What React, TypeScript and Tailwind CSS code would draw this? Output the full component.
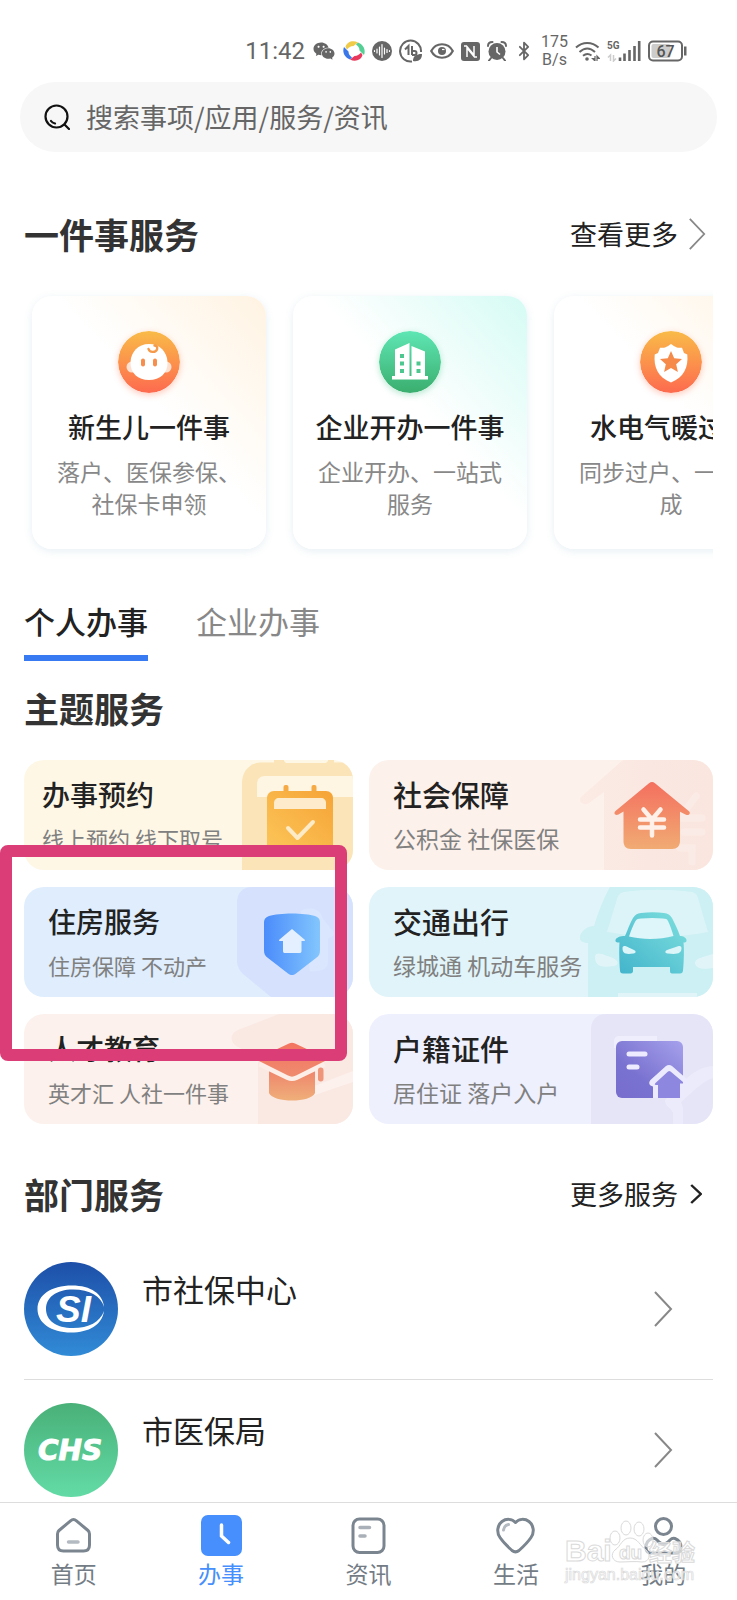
import { useState } from 'react';
import type { ReactNode } from 'react';
import { Bluetooth } from 'lucide-react';
import { AiFillWechat } from 'react-icons/ai';

const events = [
    { title: '新生儿一件事', desc: '落户、医保参保、社保卡申领', tint: 'from-[#fff3e2]', icon: <BabyIcon /> },
    { title: '企业开办一件事', desc: '企业开办、一站式服务', tint: 'from-[#d5fbf4]', icon: <BuildingIcon /> },
    { title: '水电气暖过户', desc: '同步过户、一次办成', tint: 'from-[#fff3e2]', icon: <ShieldStarIcon /> },
];

const topics = [
    { title: '办事预约', desc: '线上预约 线下取号', box: 'bg-[#fef7e6] pl-[18px]', text: 'text-[28px]', sub: 'text-[22px]', art: <CalendarArt /> },
    { title: '社会保障', desc: '公积金 社保医保', box: 'bg-[#fcf1eb] pl-6', text: 'text-[29px]', sub: 'text-[23px]', art: <HouseArt /> },
    { title: '住房服务', desc: '住房保障 不动产', box: 'bg-[#dfedfd] pl-6', text: 'text-[28px]', sub: 'text-[22px]', art: <ShieldArt /> },
    { title: '交通出行', desc: '绿城通 机动车服务', box: 'bg-[#e1f4f9] pl-6', text: 'text-[29px]', sub: 'text-[23px]', art: <CarArt /> },
    { title: '人才教育', desc: '英才汇 人社一件事', box: 'bg-[#fcf1ec] pl-6', text: 'text-[28px]', sub: 'text-[22px]', art: <CapArt /> },
    { title: '户籍证件', desc: '居住证 落户入户', box: 'bg-[#eff0fe] pl-6', text: 'text-[29px]', sub: 'text-[23px]', art: <DocumentArt /> },
];

const departments = [
    { name: '市社保中心', logo: <SocialLogo /> },
    { name: '市医保局', logo: <MedicalLogo /> },
];

const tabs = ['个人办事', '企业办事'];

const navItems = [
    { name: '首页', icon: <NavHome /> },
    { name: '办事', icon: <NavClock /> },
    { name: '资讯', icon: <NavNews /> },
    { name: '生活', icon: <NavHeart /> },
    { name: '我的', icon: <NavUser /> },
];

function BabyIcon() {
    return (
        <svg viewBox="0 0 62 62" className="size-[62px] rounded-full shadow-[0_2px_6px_rgba(255,110,70,0.35)]">
            <defs>
                <linearGradient id="baby" x1="0" y1="0" x2="0" y2="1">
                    <stop offset="0" stopColor="#f9bb48" />
                    <stop offset="1" stopColor="#fd6a4f" />
                </linearGradient>
            </defs>
            <circle cx="31" cy="31" r="31" fill="url(#baby)" />
            <circle cx="14" cy="36" r="5.5" fill="#fde0cf" />
            <circle cx="48" cy="36" r="5.5" fill="#fde0cf" />
            <path d="M31 13c11 0 18 8 18.500 18C50 42 42 49 31 49S12 42 12.500 31C13 21 20 13 31 13Z" fill="#fff" />
            <path d="M30.500 18c1 3.500 7 4 8.500.5.8-2.200-.5-4-2.500-4" fill="none" stroke="#f59a4b" strokeWidth="2.400" strokeLinecap="round" />
            <rect x="23" y="27.500" width="4" height="8" rx="2" fill="#f68f4d" />
            <rect x="35" y="27.500" width="4" height="8" rx="2" fill="#f68f4d" />
        </svg>
    );
}

function BuildingIcon() {
    return (
        <svg viewBox="0 0 62 62" className="size-[62px] rounded-full shadow-[0_2px_6px_rgba(60,190,130,0.35)]">
            <defs>
                <linearGradient id="building" x1="0" y1="0" x2="0" y2="1">
                    <stop offset="0" stopColor="#5fe6b4" />
                    <stop offset="1" stopColor="#3aae6e" />
                </linearGradient>
            </defs>
            <circle cx="31" cy="31" r="31" fill="url(#building)" />
            <path d="M16 45V18.500L30.500 12v33h2V15L46 20.500V45h3v3.500H13V45Z" fill="#fff" />
            <path d="M21 23h4v4h-4zM21 30.500h4v4h-4zM21 38h4v4h-4zM37.500 30.500h4v4h-4zM37.500 38h4v4h-4z" fill="#4cc78f" />
        </svg>
    );
}

function ShieldStarIcon() {
    return (
        <svg viewBox="0 0 62 62" className="size-[62px] rounded-full shadow-[0_2px_6px_rgba(255,110,70,0.35)]">
            <defs>
                <linearGradient id="star" x1="0" y1="0" x2="0" y2="1">
                    <stop offset="0" stopColor="#f9bb48" />
                    <stop offset="1" stopColor="#fd6a4f" />
                </linearGradient>
            </defs>
            <circle cx="31" cy="31" r="31" fill="url(#star)" />
            <path d="M31 13c5 3.500 6 4 11 3.800l2 5.200 3.300 1.500C48.500 36 44 46.500 31 51.500 18 46.500 13.500 36 14.700 23.500L18 22l2-5.200c5 .2 6-.3 11-3.800Z" fill="#fff" />
            <path d="m31 20 3.200 7.200 7.800.8-5.800 5.200 1.700 7.800-6.900-4-6.900 4 1.700-7.800L20 28l7.800-.8Z" fill="#f68a4b" />
        </svg>
    );
}

function CalendarArt() {
    return (
        <svg viewBox="0 0 136 110" className="h-[110px] w-[136px] shrink-0">
            <defs>
                <linearGradient id="cal" x1="1" y1="0" x2="0" y2="1">
                    <stop offset="0" stopColor="#f6a437" />
                    <stop offset="1" stopColor="#fcc558" />
                </linearGradient>
            </defs>
            <path d="M25 110V23C25 11 33 2.500 45 2.500h91V110Z" fill="#fbe4b8" />
            <path d="M57 0h60v3H57z" fill="#fbe4b8" />
            <path d="M67 0h44v1l-2 2H69l-2-2Z" fill="#fef7e6" />
            <path d="M40 37V24c0-5 3-8 8-8h88v21Z" fill="#fef5e3" />
            <rect x="66.500" y="25" width="5" height="10" rx="2" fill="#f6aa44" />
            <rect x="94.500" y="25" width="5" height="10" rx="2" fill="#f6aa44" />
            <path d="M50 90V38c0-4 3-7 7-7h52c4 0 7 3 7 7v52Z" fill="url(#cal)" />
            <path d="M57 49v-6c0-3 2-5 5-5h42c3 0 5 2 5 5v6Z" fill="#fdebcb" />
            <path d="m71 68 9.500 10L96 62" fill="none" stroke="#fdeac6" strokeWidth="4" strokeLinecap="round" strokeLinejoin="round" />
        </svg>
    );
}

function HouseArt() {
    return (
        <svg viewBox="0 0 136 110" className="h-[110px] w-[136px] shrink-0">
            <defs>
                <linearGradient id="house" x1="0" y1="0" x2="0" y2="1">
                    <stop offset="0" stopColor="#f46f5f" />
                    <stop offset="1" stopColor="#f1ab73" />
                </linearGradient>
                <linearGradient id="houseBack" x1="0" y1="0" x2="1" y2="0">
                    <stop offset="0" stopColor="#fbebe4" />
                    <stop offset="0.500" stopColor="#fae7e1" />
                    <stop offset="1" stopColor="#fae6df" />
                </linearGradient>
            </defs>
            <path d="M46 0 4 37c-3 4 2 10 8 6l15-11v78h109V0Z" fill="url(#houseBack)" />
            <path d="M119 36 103 58h22M107 72h18M103 88h12v14" fill="none" stroke="#fbebe6" strokeWidth="7" strokeLinecap="round" />
            <path d="M75 22c1 0 2 .5 3 1.300l34 28c2 2 0 4.500-3 3.500l-6-3V81c0 5-3 8-8 8H54c-5 0-7.500-3-7.500-8V51.500l-5 3c-3 1.500-5.500-1-3-3.500L72 23.300c1-.8 2-1.300 3-1.300Z" fill="url(#house)" />
            <path d="m66.500 49.500 8.500 10 8.500-10M63 59.500h24M63 67.500h24M75 60v15.500" fill="none" stroke="#fff1ea" strokeWidth="4.500" strokeLinecap="round" strokeLinejoin="round" />
        </svg>
    );
}

function ShieldArt() {
    return (
        <svg viewBox="0 0 136 110" className="h-[110px] w-[136px] shrink-0">
            <defs>
                <linearGradient id="shield" x1="0" y1="0" x2="1" y2="0">
                    <stop offset="0" stopColor="#4a8cfb" />
                    <stop offset="1" stopColor="#83c6fd" />
                </linearGradient>
            </defs>
            <path d="M35 0C26 0 20 6 20 15v58c0 6 2 10 6 14l28 23h82V0Z" fill="#d6e2fd" />
            <path d="M84 24c12-6 20 0 22 8l8 10c5 4 3 8-3 9v24c0 7-7 10-18 9Z" fill="#d9e6fe" />
            <path d="M75 26.500c9 0 18 1 23 2.500 3 1 5 3 5 6v28c0 4-1 6-4 8L79 86.500c-3 2-5 2-8 0L51 71c-3-2-4-4-4-8V35c0-3 2-5 5-6 5-1.500 14-2.500 23-2.500Z" fill="url(#shield)" />
            <path d="M75 42 62.500 52.500c-.8.800-.5 1.500.5 1.500h3v10c0 1.500.8 2 2 2h14.500c1.200 0 2-.5 2-2V54h2.500c1 0 1.300-.7.500-1.500Z" fill="#e4f0ff" />
        </svg>
    );
}

function CarArt() {
    return (
        <svg viewBox="0 0 136 110" className="h-[110px] w-[136px] shrink-0">
            <defs>
                <linearGradient id="car" x1="1" y1="0" x2="0" y2="1">
                    <stop offset="0" stopColor="#7fe0de" />
                    <stop offset="1" stopColor="#41b3cb" />
                </linearGradient>
            </defs>
            <path d="M33 0C26 12 21 26 17 39c-6 0-12 4-14 10-1 5 3 7 8 7v54h125V0Z" fill="#ccf0f3" />
            <path d="M40 12c1-4 3-6 7-7 20-3 46-3 68 0 4 1 5 3 6 6l10 34c-30 6-66 6-101 0Z" fill="#dcf4f8" />
            <path d="M18 70c0-4 3-4 7-3l11 4c6 3 6 7 1 8-13 2-19 0-19-9ZM118 76c0-3 4-5 8-6l10-3v14c-10 2-18 0-18-5ZM41 106h79v4H41z" fill="#e1f5f9" />
            <path d="M48 49c3-7 5-13 8-18 2-3 4-4.500 8-5 8-1 16-1 23 0 4 .5 6 2 8 5 3 6 6 12 8 18 3 0 6 1.500 6.500 4 .3 2-1 2.500-3 2.500.7 6 .5 18-.5 28-.2 2-1 3-3 3h-8c-1.500 0-2-1-2-2.500V80H56v4c0 1.500-1 2.500-2.500 2.500H46c-2 0-3-1-3-3-.8-10-1-22-.5-28-3 0-4.500-.5-4-2.500.8-2.500 4.500-4 9.500-4Z" fill="url(#car)" />
            <path d="M52 49.500c2-6 4-11 6.500-15.500C60 32 61 31.700 64 31.500c8-.8 15-.8 22 0 3 .2 4 .5 5 2.500 2 4 4 9.500 5.500 15-13 3.500-30 4-44.500.5Z" fill="#def5f9" />
            <path d="M45.500 61c0-2 1.500-2.500 3.500-1.800l8 3.800c2.500 1.500 2 3-.5 3.500-8 1.200-11 0-11-5.500ZM104.500 61c0-2-1.500-2.500-3.500-1.800L90 63c-2.500 1.500-2 3 .5 3.500 10 1.200 14 0 14-5.500Z" fill="#dcf5f8" />
        </svg>
    );
}

function CapArt() {
    return (
        <svg viewBox="0 0 136 110" className="h-[110px] w-[136px] shrink-0">
            <defs>
                <linearGradient id="cap" gradientUnits="userSpaceOnUse" x1="0" y1="28" x2="0" y2="87">
                    <stop offset="0" stopColor="#f4735f" />
                    <stop offset="0.550" stopColor="#ef8a6e" />
                    <stop offset="1" stopColor="#efb07a" />
                </linearGradient>
            </defs>
            <path d="M62 0 21 16c-9 4-8 13 0 17l20 11v66h95V0Z" fill="#fae8e3" />
            <path d="m136 57-44 17v9l44-15Z" fill="#fcf1ed" />
            <path d="M52 57v22c4 10 42 10 46 0V57Z" fill="url(#cap)" />
            <path d="m43 49 28 13.500c3 1.500 5 1.500 8 0L107 49" fill="none" stroke="#fcefe9" strokeWidth="7" />
            <path d="M72 29.500c2-1 4-1 6 0l30 14c2 1 2 2.500 0 3.500L79 61.500c-3 1.500-5 1.500-8 0L42 47c-2-1-2-2.500 0-3.500Z" fill="url(#cap)" />
            <rect x="101" y="53.500" width="5.500" height="14" rx="2.700" fill="#ef957a" />
        </svg>
    );
}

function DocumentArt() {
    return (
        <svg viewBox="0 0 136 110" className="h-[110px] w-[136px] shrink-0">
            <defs>
                <linearGradient id="doc" x1="0" y1="1" x2="1" y2="0">
                    <stop offset="0" stopColor="#766dcd" />
                    <stop offset="0.350" stopColor="#7a72d0" />
                    <stop offset="1" stopColor="#a6a1ec" />
                </linearGradient>
            </defs>
            <path d="M14 110V15C14 6 20 0 29 0h107v110Z" fill="#e6e5f8" />
            <path d="M37 34v-7c0-3 2-5 5-5h38v6Z" fill="#eeeefc" />
            <path d="M136 52c-12 1-20 6-30 16L88 86c0 8 8 8 8 14v10h10V94l-2-6c12-10 20-20 32-24Z" fill="#ecebfb" />
            <rect x="39" y="27" width="67" height="57" rx="6" fill="url(#doc)" />
            <rect x="49.500" y="37.500" width="21" height="5" rx="2.500" fill="#ecebff" />
            <rect x="49.500" y="50.500" width="13" height="5" rx="2.500" fill="#ecebff" />
            <path d="M76 84V72.500c-4-1-5-4-2-7L89 52c2-1.500 4-1.500 6 0l16 14v5h-4v13Z" fill="#ecebfd" />
            <path d="M81 84V71h-2c-1.500 0-1.500-1-.5-2L91 57.500c1-.8 1.500-.8 2.500 0L106 68v1.500h-3V84Z" fill="#8d87df" />
        </svg>
    );
}

function SocialLogo() {
    return (
        <svg viewBox="0 0 94 94" className="size-[94px] shrink-0">
            <defs>
                <linearGradient id="si" x1="0" y1="0" x2="0" y2="1">
                    <stop offset="0" stopColor="#1d4fa8" />
                    <stop offset="1" stopColor="#318bd6" />
                </linearGradient>
            </defs>
            <circle cx="47" cy="47" r="47" fill="url(#si)" />
            <path d="M80 45C79 32 67 23.500 48 23.500 27 23.500 13.500 33 13.500 47S27 70.500 47 70.500C65 70.500 78 63 80 49c-4 11-15 17-31 17-17 0-27-7.500-27-19S32 27.500 49 27.500 77 34 80 45Z" fill="#fff" />
            <text x="32" y="60" fontFamily="Liberation Sans, Arial, sans-serif" fontSize="37" fontWeight="700" fontStyle="italic" fill="#fff">SI</text>
        </svg>
    );
}

function MedicalLogo() {
    return (
        <svg viewBox="0 0 94 94" className="size-[94px] shrink-0">
            <defs>
                <linearGradient id="chs" x1="0" y1="0" x2="0" y2="1">
                    <stop offset="0" stopColor="#49b078" />
                    <stop offset="1" stopColor="#63dba6" />
                </linearGradient>
            </defs>
            <circle cx="47" cy="47" r="47" fill="url(#chs)" />
            <text x="46" y="57" textAnchor="middle" fontFamily="DejaVu Sans, sans-serif" fontSize="28" fontWeight="700" fontStyle="italic" fill="#fff" stroke="#fff">CHS</text>
        </svg>
    );
}

function NavHome() {
    return (
        <svg viewBox="0 0 41 41" className="size-[41px]" fill="none" strokeLinecap="round" strokeLinejoin="round">
            <path d="M17.500 5.800 6 15.500c-1.200 1-1.500 2-1.500 3.500v11c0 4 2 6 6 6h20c4 0 6-2 6-6V19c0-1.500-.3-2.500-1.500-3.500L23.500 5.800c-2-1.700-4-1.700-6 0Z" stroke="#7b858f" strokeWidth="3" />
            <path d="M15.500 27h9.500" stroke="#b4bac1" strokeWidth="3.500" />
        </svg>
    );
}

function NavClock() {
    return (
        <svg viewBox="0 0 41 41" className="size-[41px]" fill="none">
            <rect width="41" height="41" rx="7" fill="#468ffc" />
            <path d="M20.500 10v11l7 6.500" stroke="#fff" strokeWidth="3.500" strokeLinecap="round" />
        </svg>
    );
}

function NavNews() {
    return (
        <svg viewBox="0 0 41 41" className="size-[41px]" fill="none" strokeLinecap="round">
            <rect x="5" y="4" width="31" height="33.500" rx="6.500" stroke="#7b858f" strokeWidth="3" />
            <path d="M12 12.500h9.500M12 21h5" stroke="#a9b0b8" strokeWidth="3.500" />
        </svg>
    );
}

function NavHeart() {
    return (
        <svg viewBox="0 0 41 41" className="size-[41px]" fill="none" strokeLinecap="round" strokeLinejoin="round">
            <path d="M20.500 7.500C17 3.500 11 3.500 7 6.500c-5 4-5.500 11-2 16 3 4.500 7 8.500 12 13 2.500 2 4.500 2 7 0 5-4.500 9-8.500 12-13 3.500-5 3-12-2-16-4-3-10-3-13.500 1Z" stroke="#7b858f" strokeWidth="3" />
            <path d="M8.500 15c.5-3 2-5 5-5.500" stroke="#b4bac1" strokeWidth="3" />
        </svg>
    );
}

function NavUser() {
    return (
        <svg viewBox="0 0 41 41" className="size-[41px]" fill="none" strokeLinecap="round" strokeLinejoin="round">
            <circle cx="20.500" cy="11.500" r="8" stroke="#7b858f" strokeWidth="3" />
            <path d="M9 23.500c-4 1.500-6 5-6 9 0 3.500 1.500 5.500 5 5.500h25c3.500 0 5-2 5-5.500 0-4-2-7.500-6-9-2-.5-3.500 0-5 1.500-2 2.300-3.500 4-6.500 4s-4.500-1.700-6.500-4c-1.500-1.500-3-2-5-1.500Z" stroke="#7b858f" strokeWidth="3" />
        </svg>
    );
}

function Chevron({ className, width }: { className: string; width: number }) {
    return (
        <svg viewBox="0 0 20 38" preserveAspectRatio="none" className={className} fill="none" stroke="currentColor" strokeWidth={width}>
            <path d="m2 2 16 17L2 36" />
        </svg>
    );
}

function StatusBar() {
    return (
        <div className="flex h-[82px] items-center justify-end gap-[7px] pt-5 pr-[50px] font-['Roboto',sans-serif] text-[#666]">
            <span className="text-2xl">11:42</span>
            <AiFillWechat className="size-6" />
            <svg viewBox="0 0 22 22" className="size-[22px]">
                <path d="M2.500 7C4 1.500 10 0 15 2.500L10.500 6C7.500 6 6 7.500 4 9.500Z" fill="#efcb49" />
                <path d="M15 2.500c5.500 2 8 7.500 6 12.500L16.500 10.500C16.500 7.500 15 6 13 4.500Z" fill="#55cf93" />
                <path d="M19.500 15C18 20.500 12 22 7 19.500L11.500 16c3 0 4.500-1.500 6.500-3.500Z" fill="#e8395c" />
                <path d="M7 19.500C1.500 17.500-1 12 1 7l4.500 4.500c0 3 1.500 4.500 3.500 6Z" fill="#3a78ea" />
            </svg>
            <svg viewBox="0 0 20 20" className="size-5">
                <circle cx="10" cy="10" r="10" fill="#666" />
                <path d="M2.500 9.500v1M5 8v4M7.500 6v8M10 3.500v13M12.500 7v6M15 8.500v3M17.500 9.500v1" stroke="#fff" strokeWidth="1.200" strokeLinecap="round" />
            </svg>
            <svg viewBox="0 0 24 24" className="size-6" fill="none" stroke="#666" strokeWidth="2">
                <path d="M13 22.500A10.500 10.500 0 1 1 22 13" />
                <path d="M6 10.500 9.500 7v9M13 7v9M13 12h2.500a2 2 0 0 1 0 4H13" />
                <path d="M14 22c0-5 3-7 9-7 0 5-3 8-9 7Z" fill="#666" stroke="none" />
            </svg>
            <svg viewBox="0 0 24 20" className="h-5 w-6" fill="none" stroke="#666" strokeWidth="2.200">
                <path d="M1.200 10C6 1 18 1 22.800 10 18 19 6 19 1.200 10Z" />
                <circle cx="12" cy="10" r="4" fill="#666" stroke="none" />
                <path d="M12 8.500h2.500" stroke="#fff" strokeWidth="1.200" />
            </svg>
            <svg viewBox="0 0 19 19" className="size-[19px]">
                <rect width="19" height="19" rx="3" fill="#666" />
                <path d="M3 4h2.500l7.500 9V4M6 15V6l7.500 9H16" fill="none" stroke="#fff" strokeWidth="1.500" />
            </svg>
            <svg viewBox="0 0 20 20" className="size-5">
                <circle cx="10" cy="10.500" r="8.500" fill="#666" />
                <path d="M1 5c0-2.500 1.500-4 4.500-4M19 5c0-2.500-1.500-4-4.500-4M4 17l-2 2.500M16 17l2 2.500" fill="none" stroke="#666" strokeWidth="2" strokeLinecap="round" />
                <path d="M10 6v5l3 2.500" fill="none" stroke="#fff" strokeWidth="1.600" />
            </svg>
            <Bluetooth className="h-6 w-5" strokeWidth={2.2} />
            <span className="text-center text-base leading-[18px]">175<br />B/s</span>
            <svg viewBox="0 0 25 20" className="h-5 w-[25px]" fill="none" stroke="#666" strokeWidth="2">
                <path d="M1 6.500C7.500.5 17 .5 23.500 6.500M4.500 11c5-4.500 10.500-4.500 15.500 0M8 14.800c3-2.500 5.500-2.500 8.500-.3" />
                <circle cx="12" cy="18" r="1.800" fill="#666" stroke="none" />
                <path d="M20 15v5l-2.500-2.500h2.500M22 20v-5l2.500 2.500H22" strokeWidth="1.200" />
            </svg>
            <svg viewBox="0 0 34 22" className="h-[22px] w-[34px]" fill="none" stroke="#666">
                <text x="0" y="9" fontFamily="Roboto, sans-serif" fontSize="10" fontWeight="700" fill="#666" stroke="none">5G</text>
                <path d="M3.500 21v-6L1 17.500M6.500 15v6l2.500-2.500" stroke="#ccc" strokeWidth="1.500" />
                <path d="M13 21v-3.500M17.500 21v-7.500M22.500 21V10M27.500 21V6M32.200 21V1" strokeWidth="2.600" />
            </svg>
            <svg viewBox="0 0 39 22" className="h-[22px] w-[39px]">
                <rect x="1" y="1.500" width="33" height="19" rx="4" fill="#fff" stroke="#666" strokeWidth="2" />
                <rect x="3.500" y="4" width="19" height="14" rx="2" fill="#ccc" />
                <rect x="36" y="6.500" width="2.500" height="9" fill="#666" />
                <text x="17.500" y="16.500" textAnchor="middle" fontFamily="Roboto, sans-serif" fontSize="16" fontWeight="500" fill="#555">67</text>
            </svg>
        </div>
    );
}

function SectionTitle({ children, more }: { children: ReactNode; more?: ReactNode }) {
    return (
        <div className="flex items-center justify-between">
            <h2 className="text-[35px] leading-10 font-bold text-[#333]">{children}</h2>
            {more}
        </div>
    );
}

function Watermark() {
    return (
        <svg viewBox="0 0 140 70" className="pointer-events-none absolute right-9 bottom-3 h-[70px] w-[140px]" fill="#fff" fillOpacity="0.600" stroke="#dadada">
            <text x="4" y="43" fontFamily="Liberation Sans, Arial, sans-serif" fontSize="30" fontWeight="700">Bai</text>
            <ellipse cx="54" cy="20" rx="5" ry="7" />
            <ellipse cx="65" cy="10" rx="5" ry="7" />
            <ellipse cx="78" cy="11" rx="5" ry="7" />
            <ellipse cx="87" cy="22" rx="5" ry="7" />
            <path d="M69 20c-8 0-9 8-15 12-5 4-3 12 5 12 6 0 16-1 22 0 8 0 9-8 4-12-6-4-8-12-16-12Z" />
            <text x="58" y="41" fontFamily="Liberation Sans, Arial, sans-serif" fontSize="19" fontWeight="700">du</text>
            <text x="88" y="43" fontFamily="Noto Sans CJK SC, sans-serif" fontSize="23" fontWeight="700">经验</text>
            <text x="4" y="62" fontFamily="Liberation Sans, Arial, sans-serif" fontSize="16" strokeWidth="0.700">jingyan.baidu.com</text>
        </svg>
    );
}

export default function App() {
    const [keyword, setKeyword] = useState('');
    const [tab, setTab] = useState('个人办事');
    const [page, setPage] = useState('办事');

    return (
        <div className="flex min-h-screen flex-col bg-white font-['Noto_Sans_CJK_SC',sans-serif] text-[#222]">
            <StatusBar />

            <label className="mx-5 flex h-[70px] items-center gap-4 rounded-full bg-[#f7f7f7] px-6">
                <svg viewBox="0 0 26 26" className="size-[26px] shrink-0" fill="none" stroke="#111" strokeWidth="2.200" strokeLinecap="round">
                    <circle cx="12.500" cy="12.500" r="11" />
                    <path d="m20.500 20.500 4.500 4.500M7 17c1 1.500 2 2 4 2.500" />
                </svg>
                <input
                    type="search"
                    aria-label="搜索"
                    placeholder="搜索事项/应用/服务/资讯"
                    className="min-w-0 flex-1 bg-transparent text-[27px] leading-10 outline-none placeholder:text-[#666]"
                    value={keyword}
                    onChange={(e) => setKeyword(e.target.value)}
                />
            </label>

            <main className="flex-1 px-6">
                <section className="mt-[62px]">
                    <SectionTitle
                        more={
                            <a href="#events" className="flex items-center gap-2.5 pr-[7px] text-[27px] leading-10">
                                查看更多
                                <Chevron className="h-[34px] w-[18px] text-[#888]" width={2} />
                            </a>
                        }
                    >
                        一件事服务
                    </SectionTitle>
                    <div className="mt-[26px] flex gap-[27px] overflow-hidden pt-4 pb-6 pl-2">
                        {events.map((item) => (
                            <a
                                key={item.title}
                                href="#event"
                                className={`flex h-[253px] w-[234px] shrink-0 flex-col items-center rounded-[20px] bg-linear-to-bl to-45% to-white px-6 pt-[35px] text-center shadow-[0_2px_8px_rgba(60,120,160,0.12)] ${item.tint}`}
                            >
                                {item.icon}
                                <h3 className="mt-3.5 text-[27px] leading-10 font-medium whitespace-nowrap">{item.title}</h3>
                                <p className="mt-2 text-[23px] leading-8 text-[#888]">{item.desc}</p>
                            </a>
                        ))}
                    </div>
                </section>

                <div role="tablist" className="mt-[26px] flex gap-12">
                    {tabs.map((name) => (
                        <button
                            key={name}
                            type="button"
                            role="tab"
                            aria-selected={tab === name}
                            onClick={() => setTab(name)}
                            className={`border-b-6 pb-3 text-[31px] leading-11 ${tab === name ? 'border-[#377af1] font-medium' : 'border-transparent text-[#888]'}`}
                        >
                            {name}
                        </button>
                    ))}
                </div>

                <section className="mt-[27px]">
                    <SectionTitle>主题服务</SectionTitle>
                    <div className="relative mt-8 grid grid-cols-[329fr_344fr] gap-x-4 gap-y-[17px]">
                        {topics.map((item) => (
                            <a key={item.title} href="#topic" className={`flex h-[110px] overflow-hidden rounded-[20px] ${item.box}`}>
                                <span className="min-w-0 flex-1 pt-3.5 whitespace-nowrap">
                                    <strong className={`block leading-10 font-medium ${item.text}`}>{item.title}</strong>
                                    <span className={`mt-2 block leading-8 text-[#808080] ${item.sub}`}>{item.desc}</span>
                                </span>
                                {item.art}
                            </a>
                        ))}
                        <div className="pointer-events-none absolute top-[85px] -left-6 h-[216px] w-[347px] rounded-lg border-12 border-[#db3d77]" />
                    </div>
                </section>

                <section className="mt-[50px]">
                    <SectionTitle
                        more={
                            <a href="#departments" className="flex items-center gap-3 pr-[11px] text-[27px] leading-10">
                                更多服务
                                <Chevron className="h-5 w-3" width={4} />
                            </a>
                        }
                    >
                        部门服务
                    </SectionTitle>
                    <ul className="mt-[25px]">
                        {departments.map((item) => (
                            <li key={item.name} className="border-b border-[#ddd] last:border-0">
                                <a href="#department" className="flex items-start gap-6 py-[23px] pr-10">
                                    {item.logo}
                                    <span className="flex-1 pt-[5px] text-[31px] leading-11">{item.name}</span>
                                    <Chevron className="h-[38px] w-5 self-center text-[#888]" width={2} />
                                </a>
                            </li>
                        ))}
                    </ul>
                </section>
            </main>

            <nav className="sticky bottom-0 -mt-[18px] grid grid-cols-5 border-t border-[#ddd] bg-white pt-3 pb-3">
                {navItems.map((item) => (
                    <button
                        key={item.name}
                        type="button"
                        onClick={() => setPage(item.name)}
                        className={`flex flex-col items-center gap-0.5 text-[23px] leading-[30px] ${page === item.name ? 'text-[#468ffc]' : 'text-[#737c85]'}`}
                    >
                        {item.icon}
                        {item.name}
                    </button>
                ))}
                <Watermark />
            </nav>
        </div>
    );
}
